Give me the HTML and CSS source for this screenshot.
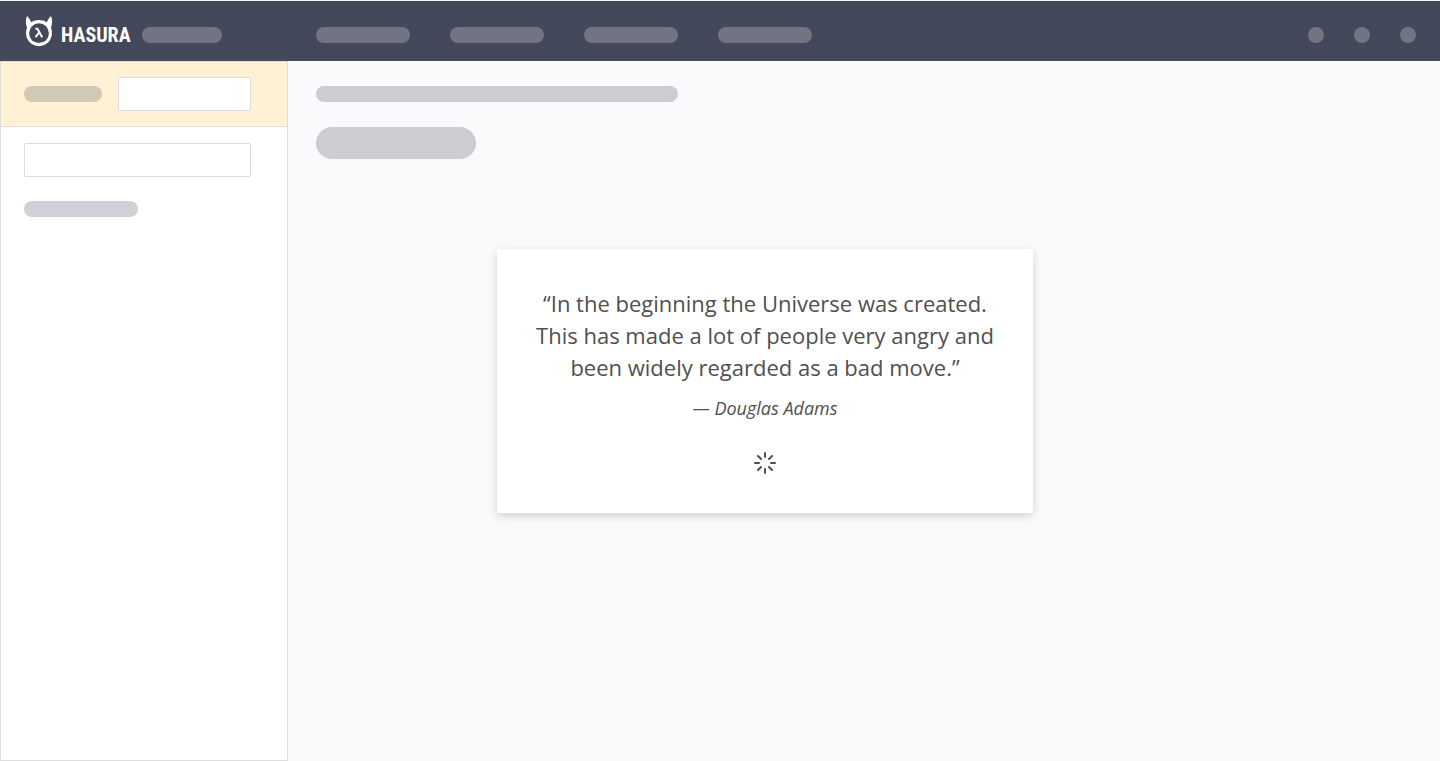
FILE: index.html
```html
<!DOCTYPE html>
<html lang="en">
<head>
<meta charset="utf-8">
<meta name="viewport" content="width=device-width, initial-scale=1">
<title>Hasura</title>
<link rel="stylesheet" href="styles.css">
</head>
<body>
<div class="app">
  <header class="topbar">
    <div class="brand">
      <svg class="brand-icon" viewBox="0 0 26 31" aria-hidden="true">
        <path class="solid" d="M1 0C2.8 1.4 4 3.6 5.2 6.2C10 3.4 16 3.4 20.8 6.2C22 3.6 23.2 1.4 25 0C26.6 3.6 26.4 7.6 25 11.4C28.4 21 22.4 30.2 13 30.2S-2.4 21 1 11.4C-.4 7.6-.6 3.6 1 0Z"/>
        <circle class="hole" cx="13" cy="17.2" r="9.9"/>
        <path class="lambda" d="M9.4 12.8h2l4.8 8.4M12.9 16.8l-3.4 4.4"/>
      </svg>
      <span class="brand-name">HASURA</span>
      <span class="pill pill-version"></span>
    </div>
    <nav class="tabs" aria-label="Main">
      <span class="pill pill-tab"></span>
      <span class="pill pill-tab"></span>
      <span class="pill pill-tab"></span>
      <span class="pill pill-tab"></span>
    </nav>
    <div class="actions">
      <span class="dot"></span>
      <span class="dot"></span>
      <span class="dot"></span>
    </div>
  </header>
  <div class="body">
    <aside class="sidebar">
      <div class="schema">
        <span class="pill pill-schema"></span>
        <input class="field" type="text" aria-label="Schema">
      </div>
      <div class="tables">
        <input class="field" type="text" aria-label="Search tables">
        <span class="pill pill-table"></span>
      </div>
    </aside>
    <main class="content">
      <span class="pill pill-crumb"></span>
      <span class="pill pill-heading"></span>
      <section class="card">
        <blockquote class="quote">“In the beginning the Universe was created.<br>This has made a lot of people very angry and<br>been widely regarded as a bad move.”</blockquote>
        <cite class="author">— Douglas Adams</cite>
        <svg class="spinner" viewBox="0 0 22 22" role="img" aria-label="Loading">
          <path d="M11 1v4M11 17v4M1 11h4M17 11h4M4 4l3 3M15 15l3 3M4 18l3-3M15 7l3-3"/>
        </svg>
      </section>
    </main>
  </div>
</div>
</body>
</html>
```
FILE: styles.css
```css
* {
  box-sizing: border-box;
}

body {
  margin: 0;
  background: #f9fafc;
  color: #505050;
  font-family: "Open Sans", "Noto Sans", sans-serif;
}

.app {
  display: flex;
  flex-direction: column;
  min-height: 100vh;
  padding-top: 1px;
}

.topbar {
  display: flex;
  align-items: center;
  height: 60px;
  padding: 8px 24px 0;
  background: #43495a;
}

.brand {
  display: flex;
  align-items: center;
  width: 292px;
}

.brand-icon {
  width: 30px;
  height: 31px;
  margin-top: -8px;
}

.solid {
  fill: #fff;
}

.hole {
  fill: #43495a;
}

.lambda {
  fill: none;
  stroke: #fff;
  stroke-width: 2;
}

.brand-name {
  width: 68px;
  margin: 0 13px 0 7px;
  color: #fff;
  font-family: "Roboto Condensed", "Liberation Sans Narrow", "Liberation Sans", sans-serif;
  font-size: 20px;
  font-weight: 700;
  line-height: 16px;
}

.pill {
  display: block;
  height: 16px;
  border-radius: 16px;
  background: #d0d1d7;
}

.topbar .pill,
.dot {
  background: #727581;
}

.pill-version {
  width: 80px;
}

.tabs {
  display: flex;
  gap: 40px;
}

.pill-tab {
  width: 94px;
}

.actions {
  display: flex;
  gap: 30px;
  margin-left: auto;
}

.dot {
  width: 16px;
  height: 16px;
  border-radius: 50%;
}

.body {
  display: flex;
  flex: 1;
}

.sidebar {
  width: 288px;
  border: 1px solid #ddd;
  background: #fff;
}

.schema {
  display: flex;
  align-items: center;
  gap: 16px;
  padding: 15px 36px 15px 23px;
  border-bottom: 1px solid #ddd;
  background: #fff2d4;
}

.pill-schema {
  width: 78px;
  flex: none;
  background: #d1c8b6;
}

.field {
  width: 100%;
  min-width: 0;
  height: 34px;
  padding: 0 8px;
  border: 1px solid #ddd;
  border-radius: 2px;
  background: #fff;
  font: inherit;
}

.tables {
  display: flex;
  flex-direction: column;
  gap: 24px;
  padding: 16px 36px 16px 23px;
}

.pill-table {
  width: 114px;
}

.content {
  flex: 1;
  max-width: 954px;
  padding: 25px 28px;
}

.content .pill {
  background: #cccdd3;
}

.pill-crumb {
  width: 362px;
}

.content .pill-heading {
  width: 160px;
  height: 32px;
  margin-top: 25px;
}

.card {
  display: flex;
  flex-direction: column;
  align-items: center;
  max-width: 536px;
  margin: 90px auto 0;
  padding: 38px 24px 39px;
  border-radius: 2px;
  background: #fff;
  box-shadow: 0 3px 8px rgba(0, 0, 0, 0.16);
}

.quote {
  margin: 0;
  font-size: 22px;
  line-height: 32px;
  text-align: center;
}

.author {
  margin-top: 13px;
  font-size: 18px;
  line-height: 24px;
}

.spinner {
  width: 22px;
  height: 22px;
  margin-top: 32px;
  fill: none;
  stroke: #505050;
  stroke-width: 2;
  stroke-linecap: round;
}
```
